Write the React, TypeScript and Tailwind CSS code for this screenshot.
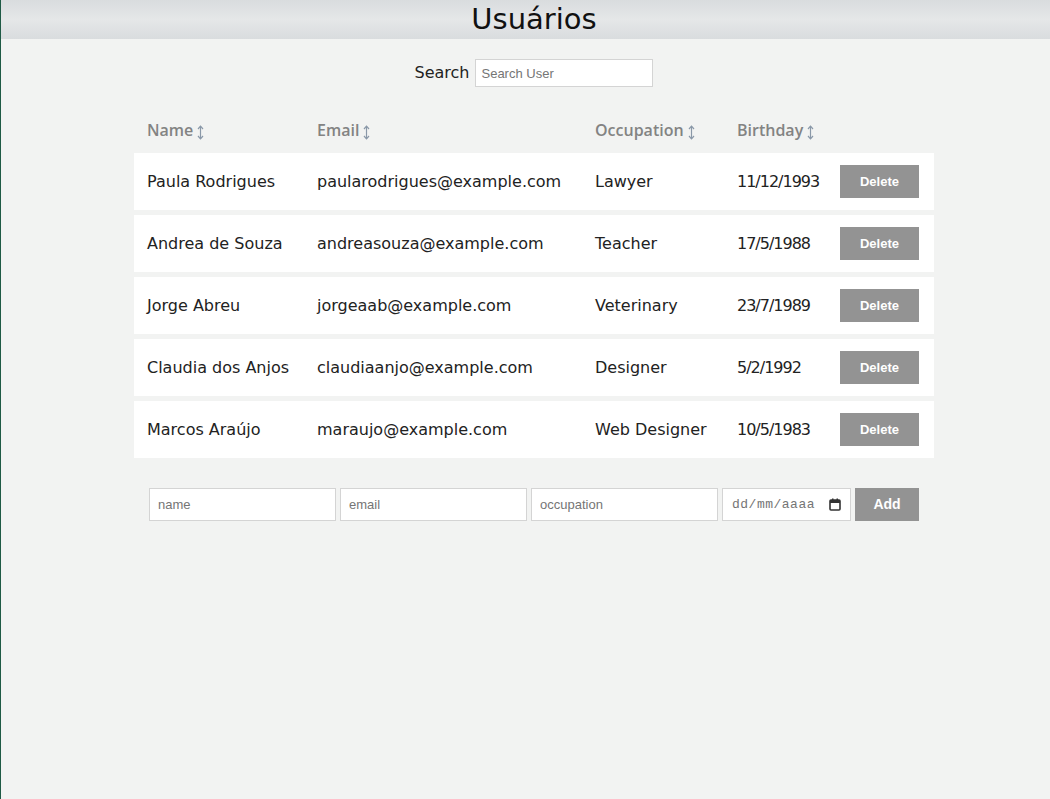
import { useState } from "react";

type User = {
  name: string;
  email: string;
  occupation: string;
  birthday: string;
};

const initialUsers: User[] = [
  { name: "Paula Rodrigues", email: "paularodrigues@example.com", occupation: "Lawyer", birthday: "11/12/1993" },
  { name: "Andrea de Souza", email: "andreasouza@example.com", occupation: "Teacher", birthday: "17/5/1988" },
  { name: "Jorge Abreu", email: "jorgeaab@example.com", occupation: "Veterinary", birthday: "23/7/1989" },
  { name: "Claudia dos Anjos", email: "claudiaanjo@example.com", occupation: "Designer", birthday: "5/2/1992" },
  { name: "Marcos Araújo", email: "maraujo@example.com", occupation: "Web Designer", birthday: "10/5/1983" },
];

const sans = "font-['DejaVu_Sans',sans-serif]";
const arial = "font-['Liberation_Sans',Arial,sans-serif]";

function SortArrow() {
  return (
    <svg width="7" height="15" viewBox="0 0 7 15" className="inline-block ml-[4px] -mb-[2px]">
      <path d="M3.5 1.5V13.5" stroke="#8a98a8" strokeWidth="1.2" />
      <path d="M1 4L3.5 1.2L6 4" fill="none" stroke="#8a98a8" strokeWidth="1.2" />
      <path d="M1 11L3.5 13.8L6 11" fill="none" stroke="#8a98a8" strokeWidth="1.2" />
    </svg>
  );
}

function SortHead({ label }: { label: string }) {
  return (
    <th className="px-[13px] text-left text-[16px] font-semibold text-[#838383] whitespace-nowrap font-['Open_Sans',sans-serif]">
      {label}
      <SortArrow />
    </th>
  );
}

function CalendarIcon() {
  return (
    <svg width="12" height="13" viewBox="0 0 12 13" className="shrink-0">
      <rect x="1" y="2" width="10" height="10" rx="1" fill="none" stroke="#333" strokeWidth="1.6" />
      <rect x="1" y="2" width="10" height="3" fill="#333" />
      <rect x="3" y="0.5" width="1.5" height="2.5" fill="#333" />
      <rect x="7.5" y="0.5" width="1.5" height="2.5" fill="#333" />
    </svg>
  );
}

export default function App() {
  const [users, setUsers] = useState<User[]>(initialUsers);
  const [search, setSearch] = useState("");

  const shown = users.filter((u) => u.name.toLowerCase().includes(search.toLowerCase()));

  return (
    <div className={`min-h-[799px] bg-[#f2f3f2] border-l border-[#1f5a45] ${sans}`}>
      <header className="h-[39px] bg-gradient-to-b from-[#d9dcde] via-[#e5e7e8] to-[#d9dcde] flex items-center justify-center pl-[17px]">
        <h1 className="text-[29px] font-normal text-[#111] leading-none">Usuários</h1>
      </header>

      <div className="pl-[17px]">
        <div className="flex items-center justify-center gap-[6px] mt-[20px]">
          <label className="text-[16px] text-[#222]">Search</label>
          <input
            value={search}
            onChange={(e) => setSearch(e.target.value)}
            placeholder="Search User"
            className={`w-[178px] h-[28px] bg-white border border-[#d4d4d4] px-[5px] text-[13px] placeholder:text-[#757575] outline-none ${arial}`}
          />
        </div>

        <table className="mx-auto mt-[20px] w-[800px] table-fixed border-separate border-spacing-y-[5px]">
          <colgroup>
            <col className="w-[170px]" />
            <col className="w-[278px]" />
            <col className="w-[142px]" />
            <col className="w-[103px]" />
            <col className="w-[107px]" />
          </colgroup>
          <thead>
            <tr className="h-[36px]">
              <SortHead label="Name" />
              <SortHead label="Email" />
              <SortHead label="Occupation" />
              <SortHead label="Birthday" />
              <th />
            </tr>
          </thead>
          <tbody>
            {shown.map((u) => (
              <tr key={u.email} className="h-[57px] bg-white text-[16px] text-[#222]">
                <td className="px-[13px] whitespace-nowrap">{u.name}</td>
                <td className="px-[13px] whitespace-nowrap">{u.email}</td>
                <td className="px-[13px] whitespace-nowrap">{u.occupation}</td>
                <td className="px-[13px] whitespace-nowrap tracking-[-1px]">{u.birthday}</td>
                <td className="px-[13px]">
                  <button
                    onClick={() => setUsers(users.filter((x) => x.email !== u.email))}
                    className={`w-[79px] h-[33px] bg-[#939393] text-white text-[13px] font-bold ${arial}`}
                  >
                    Delete
                  </button>
                </td>
              </tr>
            ))}
          </tbody>
        </table>

        <form
          onSubmit={(e) => e.preventDefault()}
          className={`mx-auto mt-[25px] w-[770px] flex gap-[4px] ${arial}`}
        >
          <input placeholder="name" className="w-[187px] h-[33px] bg-white border border-[#d4d4d4] px-[8px] text-[13px] placeholder:text-[#757575]" />
          <input placeholder="email" className="w-[187px] h-[33px] bg-white border border-[#d4d4d4] px-[8px] text-[13px] placeholder:text-[#757575]" />
          <input placeholder="occupation" className="w-[187px] h-[33px] bg-white border border-[#d4d4d4] px-[8px] text-[13px] placeholder:text-[#757575]" />
          <div className="w-[129px] h-[33px] bg-white border border-[#d4d4d4] px-[9px] flex items-center gap-[2px]">
            <input
              placeholder="dd/mm/aaaa"
              className="w-full min-w-0 text-[13px] placeholder:text-[#757575] font-['Liberation_Mono',monospace] outline-none tracking-[0.5px]"
            />
            <CalendarIcon />
          </div>
          <button className="w-[64px] h-[33px] bg-[#939393] text-white text-[14px] font-bold">Add</button>
        </form>
      </div>
    </div>
  );
}
